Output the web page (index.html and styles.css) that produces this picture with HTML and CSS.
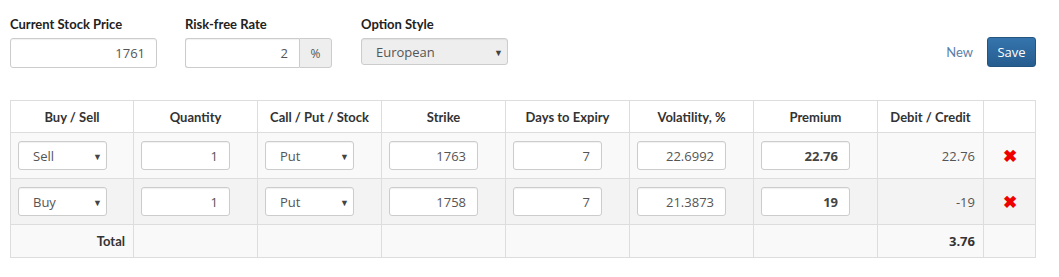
FILE: index.html
```html
<!DOCTYPE html>
<html lang="en">
<head>
    <meta charset="UTF-8">
    <title>Option Strategy</title>
    <link rel="stylesheet" href="styles.css">
</head>
<body>
    <div class="settings">
        <div class="field field-price">
            <label>Current Stock Price</label>
            <input class="ctl num" type="text" value="1761">
        </div>
        <div class="field field-rate">
            <label>Risk-free Rate</label>
            <div class="group">
                <input class="ctl num" type="text" value="2">
                <span class="addon">%</span>
            </div>
        </div>
        <div class="field field-style">
            <label>Option Style</label>
            <div class="sel sel-style">
                <select class="ctl" disabled>
                    <option>European</option>
                </select>
            </div>
        </div>
        <div class="actions">
            <a href="#" class="new-link">New</a>
            <button class="btn-save">Save</button>
        </div>
    </div>

    <table class="legs">
        <thead>
            <tr>
                <th>Buy / Sell</th>
                <th>Quantity</th>
                <th>Call / Put / Stock</th>
                <th>Strike</th>
                <th>Days to Expiry</th>
                <th>Volatility, %</th>
                <th>Premium</th>
                <th>Debit / Credit</th>
                <th class="col-del"></th>
            </tr>
        </thead>
        <tbody>
            <tr>
                <td><div class="sel"><select class="ctl"><option>Sell</option><option>Buy</option></select></div></td>
                <td><input class="ctl num" type="text" value="1"></td>
                <td><div class="sel"><select class="ctl"><option>Put</option><option>Call</option></select></div></td>
                <td><input class="ctl num" type="text" value="1763"></td>
                <td><input class="ctl num" type="text" value="7"></td>
                <td><input class="ctl num" type="text" value="22.6992"></td>
                <td><input class="ctl num strong" type="text" value="22.76"></td>
                <td class="amount">22.76</td>
                <td class="col-del"><span class="del">&#10006;</span></td>
            </tr>
            <tr class="alt">
                <td><div class="sel"><select class="ctl"><option>Buy</option><option>Sell</option></select></div></td>
                <td><input class="ctl num" type="text" value="1"></td>
                <td><div class="sel"><select class="ctl"><option>Put</option><option>Call</option></select></div></td>
                <td><input class="ctl num" type="text" value="1758"></td>
                <td><input class="ctl num" type="text" value="7"></td>
                <td><input class="ctl num" type="text" value="21.3873"></td>
                <td><input class="ctl num strong" type="text" value="19"></td>
                <td class="amount">-19</td>
                <td class="col-del"><span class="del">&#10006;</span></td>
            </tr>
            <tr class="total">
                <td class="total-label">Total</td>
                <td></td>
                <td></td>
                <td></td>
                <td></td>
                <td></td>
                <td></td>
                <td class="amount total-value">3.76</td>
                <td class="col-del"></td>
            </tr>
        </tbody>
    </table>
</body>
</html>
```

FILE: styles.css
```css
* {
    margin: 0;
    padding: 0;
    box-sizing: border-box;
}
body {
    font-family: Lato, "Open Sans", sans-serif;
    font-size: 13px;
    color: #333;
    background-color: #fff;
    padding: 16px 10px 0 10px;
}
.settings {
    display: flex;
    align-items: flex-start;
    width: 1026px;
    height: 84px;
}
.field label {
    display: block;
    font-weight: bold;
    font-size: 13px;
    line-height: 16px;
    margin-bottom: 6px;
    color: #222;
}
.field-price {
    width: 175px;
}
.field-price .ctl {
    width: 147px;
}
.field-rate {
    width: 176px;
}
.group {
    display: flex;
    width: 147px;
}
.group .ctl {
    width: 114px;
    border-radius: 3px 0 0 3px;
    border-right: none;
}
.addon {
    width: 33px;
    height: 30px;
    border: 1px solid #ccc;
    border-radius: 0 3px 3px 0;
    background-color: #eee;
    color: #555;
    font-family: "Open Sans", sans-serif;
    font-size: 12px;
    display: flex;
    align-items: center;
    justify-content: center;
}
.ctl {
    display: block;
    height: 30px;
    border: 1px solid #ccc;
    border-radius: 3px;
    background-color: #fff;
    color: #555;
    font-family: "Open Sans", sans-serif;
    font-size: 13px;
    padding: 0 11px;
    box-shadow: inset 0 1px 1px rgba(0, 0, 0, 0.06);
}
.num {
    text-align: right;
}
.strong {
    font-weight: bold;
    color: #444;
}
.sel {
    position: relative;
    display: inline-block;
    vertical-align: middle;
}
.sel select {
    appearance: none;
    -webkit-appearance: none;
    width: 89px;
    height: 29px;
    padding-left: 14px;
    text-align: left;
}
.sel::after {
    content: "\25BC";
    position: absolute;
    right: 5px;
    top: 50%;
    transform: translateY(-50%);
    font-size: 9px;
    color: #444;
    pointer-events: none;
}
.sel-style select {
    width: 147px;
    height: 27px;
    background-color: #eee;
    color: #555;
    opacity: 1;
}
.actions {
    margin-left: auto;
    display: flex;
    align-items: center;
    margin-top: 21px;
}
.new-link {
    color: #5b7ea6;
    text-decoration: none;
    font-size: 13px;
    margin-right: 14px;
}
.btn-save {
    width: 49px;
    height: 30px;
    border: 1px solid #245580;
    border-radius: 3px;
    background: linear-gradient(to bottom, #3574ad 0%, #275d8f 100%);
    color: #fff;
    font-family: "Open Sans", sans-serif;
    font-size: 13px;
    cursor: pointer;
}
.legs {
    width: 1025px;
    border-collapse: collapse;
    table-layout: fixed;
}
.legs th,
.legs td {
    border: 1px solid #ddd;
    width: 124px;
    padding: 7px;
    vertical-align: middle;
}
.legs th:first-child,
.legs td:first-child {
    width: 123px;
}
.legs th {
    height: 32px;
    font-weight: bold;
    text-align: center;
    color: #333;
    background-color: #fff;
}
.legs td {
    height: 46px;
    background-color: #f9f9f9;
}
.legs tr.alt td {
    background-color: #f3f3f3;
}
.legs td .ctl.num {
    width: 89px;
    height: 29px;
}
.legs th:nth-child(8),
.legs td:nth-child(8) {
    width: 106px;
}
.legs .col-del {
    width: 52px;
    text-align: center;
}
.amount {
    text-align: right;
    color: #555;
    font-family: "Open Sans", sans-serif;
    padding-right: 8px !important;
}
.del {
    color: #e00;
    font-size: 17px;
    font-weight: bold;
}
.legs tr.total td {
    height: 32px;
}
.total-label {
    text-align: right;
    font-weight: bold;
    padding-right: 8px !important;
}
.total-value {
    font-weight: bold;
    color: #333;
}
```
